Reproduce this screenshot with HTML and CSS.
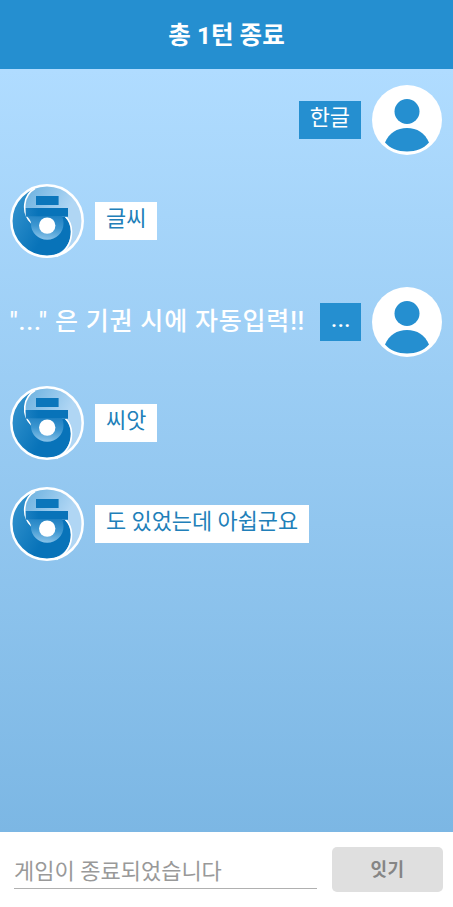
FILE: index.html
```
<!DOCTYPE html>
<html lang="ko">
<head>
<meta charset="utf-8">
<title>총 1턴 종료</title>
<link rel="stylesheet" href="styles.css">
</head>
<body>
<svg class="defs" aria-hidden="true">
  <defs>
    <linearGradient id="sky" x1="0" y1="0.2" x2="1" y2="0.8"><stop offset="0.15" stop-color="#74b6e2"/><stop offset="0.65" stop-color="#b0d6f4"/></linearGradient>
    <linearGradient id="wave" x1="0" y1="0" x2="1" y2="0.6"><stop offset="0" stop-color="#3997d0"/><stop offset="0.7" stop-color="#0873b9"/></linearGradient>
    <linearGradient id="bowl" x1="0.6" y1="0" x2="0.4" y2="1"><stop offset="0" stop-color="#2383c4"/><stop offset="0.45" stop-color="#3d97d1"/><stop offset="1" stop-color="#8dc5ea"/></linearGradient>
    <linearGradient id="brim" x1="0" y1="0" x2="1" y2="0"><stop offset="0" stop-color="#1b7fc1"/><stop offset="0.3" stop-color="#0873b9"/></linearGradient>
  </defs>
  <symbol id="logo" viewBox="0 0 74 74">
    <circle cx="37" cy="37" r="35.6" fill="url(#sky)"/>
    <path d="M23 5C10 10 2 23 2 37c0 20 16 35 35 35 14 0 24-11 24-24 0-6-2-11-6-15H40L21 39C13 31 12 15 23 5Z" fill="url(#wave)"/>
    <path d="M25 4.500C13 11 11 29 21.500 39M55.500 32.500c4 4 6 9 6 15 0 11-6 20-15 25" fill="none" stroke="#fff" stroke-width="1.600"/>
    <path d="M17 32.500H52c1 2 1.500 4.500 1.500 7a16.300 16.300 0 0 1-32.600 0C20.900 36.500 19.500 34.500 17 32.500Z" fill="url(#bowl)"/>
    <path d="M26 12h22.600v9H26z" fill="#0b76bb"/>
    <path d="M15.700 24h42.300v8.700H15.700z" fill="url(#brim)"/>
    <circle cx="37.200" cy="41.600" r="8.200" fill="#fff"/>
    <circle cx="37" cy="37" r="35.700" fill="none" stroke="#fff" stroke-width="2.500"/>
  </symbol>
  <symbol id="person" viewBox="0 0 70 70">
    <circle cx="35" cy="35" r="35" fill="#fff"/>
    <circle cx="35" cy="26.500" r="12.500" fill="#258fd0"/>
    <path d="M13 57.500C17 48 25 43 35 43s18 5 22 14.500C52 63.500 44 66.500 35 66.500S18 63.500 13 57.500Z" fill="#258fd0"/>
  </symbol>
</svg>
<div class="app">
  <header class="header"><span class="title">총 1턴 종료</span></header>
  <main class="chat">
    <div class="row mine"><span class="bubble">한글</span><svg class="avatar"><use href="#person"/></svg></div>
    <div class="row"><svg class="logo"><use href="#logo"/></svg><span class="bubble">글씨</span></div>
    <div class="row mine"><span class="note">"..." 은 기권 시에 자동입력!!</span><span class="bubble dots">...</span><svg class="avatar"><use href="#person"/></svg></div>
    <div class="row"><svg class="logo"><use href="#logo"/></svg><span class="bubble">씨앗</span></div>
    <div class="row"><svg class="logo"><use href="#logo"/></svg><span class="bubble">도 있었는데 아쉽군요</span></div>
  </main>
  <footer class="footer">
    <div class="field">게임이 종료되었습니다</div>
    <button class="send" disabled>잇기</button>
  </footer>
</div>
</body>
</html>
```
FILE: styles.css
```
* { box-sizing: border-box; }
body { margin: 0; font-family: Roboto, "Noto Sans CJK KR", sans-serif; }
.defs { position: absolute; width: 0; height: 0; }
.app { display: flex; flex-direction: column; height: 907px; overflow: hidden; background: #fff; }
.header { flex: none; height: 69px; padding-top: 2px; display: flex; align-items: center; justify-content: center; background: #258fd0; }
.title { color: #fff; font-size: 24.5px; font-weight: 700; line-height: 36px; white-space: nowrap; }
.chat { flex: 1; padding-top: 1px; background: linear-gradient(#b0dcff, #7cb7e4); }
.row { display: flex; align-items: center; height: 100.8px; padding: 0 11px 0 10px; }
.mine { justify-content: flex-end; }
.logo { flex: none; width: 74px; height: 74px; margin-right: 11px; }
.avatar { flex: none; width: 70px; height: 70px; margin-left: 11px; }
.bubble { height: 38px; padding: 0 11px; background: #fff; color: #217fb9; font-size: 21.9px; line-height: 34px; white-space: nowrap; }
.mine .bubble { background: #258fd0; color: #fff; }
.mine .dots { width: 41px; letter-spacing: 0.6px; font-weight: 500; }
.note { margin-right: 15px; color: #fff; font-size: 25px; font-weight: 500; letter-spacing: 0.8px; white-space: nowrap; line-height: 38px; }
.footer { flex: none; display: flex; height: 75px; padding: 15px 10px 0 14px; }
.field { width: 303px; height: 42px; margin-right: 15px; padding-top: 8px; border-bottom: 1px solid #b0b0b0; color: #999; font-size: 22px; line-height: 34px; white-space: nowrap; }
.send { flex: 1; height: 45px; padding: 0; border: 0; border-radius: 5px; background: #dfdfdf; color: #858585; font: 700 18px/45px Roboto, "Noto Sans CJK KR", sans-serif; letter-spacing: 0.4px; }
```
